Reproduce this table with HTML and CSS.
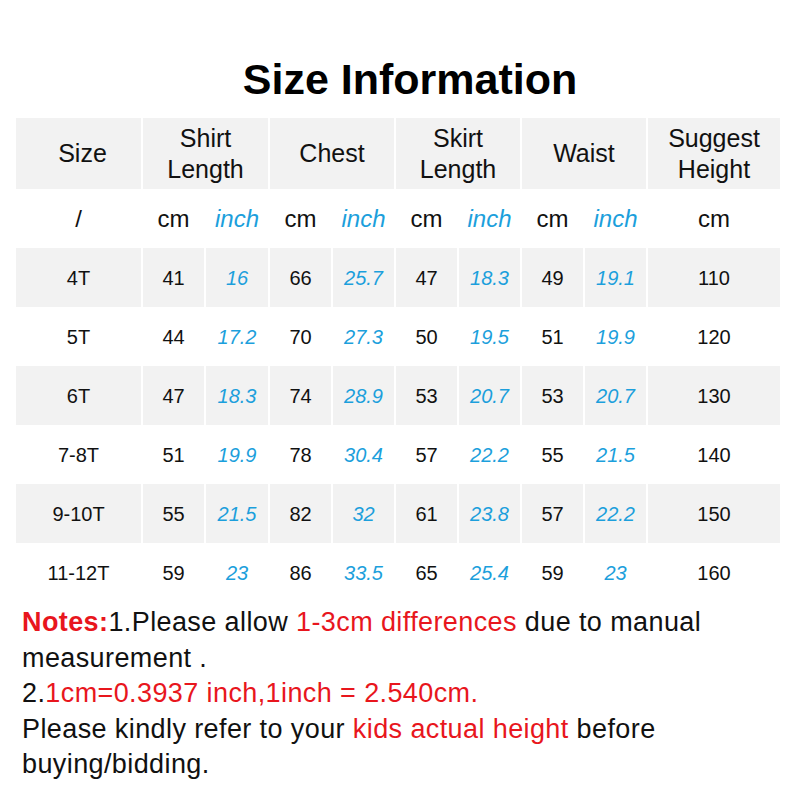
FILE: index.html
```html
<!DOCTYPE html>
<html>
<head>
<meta charset="utf-8">
<link rel="stylesheet" href="styles.css">
</head>
<body>
<div class="page">
  <h1 class="title">Size Information</h1>
  <div class="chart">
    <div class="cell head size-head">Size</div>
    <div class="cell head span2">Shirt<br>Length</div>
    <div class="cell head span2">Chest</div>
    <div class="cell head span2">Skirt<br>Length</div>
    <div class="cell head span2">Waist</div>
    <div class="cell head">Suggest<br>Height</div>

    <div class="cell unit">/</div>
    <div class="cell unit">cm</div><div class="cell unit in">inch</div>
    <div class="cell unit">cm</div><div class="cell unit in">inch</div>
    <div class="cell unit">cm</div><div class="cell unit in">inch</div>
    <div class="cell unit">cm</div><div class="cell unit in">inch</div>
    <div class="cell unit">cm</div>

    <div class="cell g">4T</div><div class="cell g">41</div><div class="cell g in">16</div><div class="cell g">66</div><div class="cell g in">25.7</div><div class="cell g">47</div><div class="cell g in">18.3</div><div class="cell g">49</div><div class="cell g in">19.1</div><div class="cell g">110</div>

    <div class="cell">5T</div><div class="cell">44</div><div class="cell in">17.2</div><div class="cell">70</div><div class="cell in">27.3</div><div class="cell">50</div><div class="cell in">19.5</div><div class="cell">51</div><div class="cell in">19.9</div><div class="cell">120</div>

    <div class="cell g">6T</div><div class="cell g">47</div><div class="cell g in">18.3</div><div class="cell g">74</div><div class="cell g in">28.9</div><div class="cell g">53</div><div class="cell g in">20.7</div><div class="cell g">53</div><div class="cell g in">20.7</div><div class="cell g">130</div>

    <div class="cell">7-8T</div><div class="cell">51</div><div class="cell in">19.9</div><div class="cell">78</div><div class="cell in">30.4</div><div class="cell">57</div><div class="cell in">22.2</div><div class="cell">55</div><div class="cell in">21.5</div><div class="cell">140</div>

    <div class="cell g">9-10T</div><div class="cell g">55</div><div class="cell g in">21.5</div><div class="cell g">82</div><div class="cell g in">32</div><div class="cell g">61</div><div class="cell g in">23.8</div><div class="cell g">57</div><div class="cell g in">22.2</div><div class="cell g">150</div>

    <div class="cell">11-12T</div><div class="cell">59</div><div class="cell in">23</div><div class="cell">86</div><div class="cell in">33.5</div><div class="cell">65</div><div class="cell in">25.4</div><div class="cell">59</div><div class="cell in">23</div><div class="cell">160</div>
  </div>
  <div class="notes">
    <p><b class="red">Notes:</b>1.Please allow <span class="red">1-3cm differences</span> due to manual measurement .</p>
    <p>2.<span class="red">1cm=0.3937 inch,1inch = 2.540cm.</span></p>
    <p>Please kindly refer to your <span class="red">kids actual height</span> before buying/bidding.</p>
  </div>
</div>
</body>
</html>
```

FILE: styles.css
```css
html, body {
  margin: 0;
  padding: 0;
  background: #fff;
}
body {
  font-family: "Liberation Sans", Arial, sans-serif;
  color: #111;
}
.page {
  width: 800px;
  height: 800px;
  overflow: hidden;
}
.title {
  margin: 0;
  padding: 55px 0 15px 20px;
  font-size: 43px;
  line-height: 48px;
  font-weight: bold;
  text-align: center;
  color: #000;
}
.chart {
  margin-left: 16px;
  width: 764px;
  display: grid;
  grid-template-columns: 125px 61px 62px 61px 61px 61px 61px 61px 61px 132px;
  grid-auto-rows: 59px;
  grid-template-rows: 71px;
  column-gap: 2px;
}
.cell {
  display: flex;
  align-items: center;
  justify-content: center;
  text-align: center;
  font-size: 20px;
  padding-top: 2px;
  box-sizing: border-box;
}
.span2 {
  grid-column: span 2;
}
.head {
  background: #f2f2f2;
  font-size: 25px;
  line-height: 31px;
  padding-top: 0;
}
.size-head {
  padding-left: 8px;
}
.unit {
  font-size: 24px;
  padding-top: 0;
}
.g {
  background: #f2f2f2;
}
.in {
  color: #1c9fdc;
  font-style: italic;
}
.notes {
  padding: 3px 0 0 22px;
  font-size: 27px;
  line-height: 35.5px;
  letter-spacing: 0.4px;
  color: #111;
}
.notes p {
  margin: 0;
  width: 720px;
}
.red {
  color: #e8161d;
}
.notes b {
  font-weight: bold;
}
```
